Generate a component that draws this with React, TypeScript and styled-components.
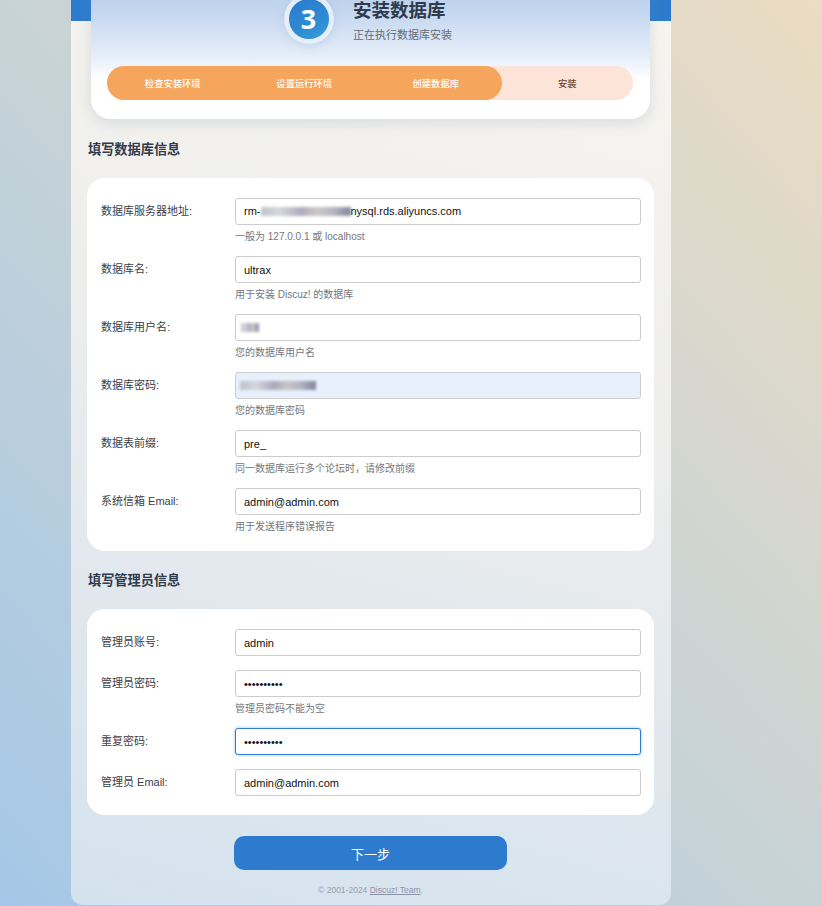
import React from "react";
import styled, { createGlobalStyle } from "styled-components";

const GlobalStyle = createGlobalStyle`
  html, body { margin: 0; padding: 0; }
  body {
    min-height: 906px;
    background: linear-gradient(to bottom left, #ebdcc3 0%, #c8d3d6 50%, #a4c7e7 100%);
    font-family: "Liberation Sans", "Noto Sans CJK SC", sans-serif;
    overflow: hidden;
  }
`;

const Shell = styled.div`
  width: 600px;
  margin-left: 71px;
  min-height: 905px;
  box-sizing: border-box;
  border-radius: 0 0 12px 12px;
  background:
    linear-gradient(#2d7bce, #2d7bce) top / 100% 21px no-repeat,
    linear-gradient(195deg, #f7f5f0 0%, #eeeeec 40%, #d4e2ef 100%);
  padding: 0 17px 7px 16px;
  display: flex;
  flex-direction: column;
`;

const HeaderCard = styled.header`
  position: relative;
  margin: -20px 4px 1px 4px;
  padding: 14px 17px 19px 16px;
  border-radius: 0 0 20px 20px;
  background: linear-gradient(180deg, #b6cceb 0%, #c6d8f0 25%, #e6eef9 55%, #ffffff 72%);
  box-shadow: 0 4px 14px rgba(120, 140, 170, 0.22);
  display: flex;
  flex-direction: column;
  gap: 22px;
`;

const HeadRow = styled.div`
  display: flex;
  align-items: center;
  justify-content: center;
  gap: 19px;
  padding-right: 4px;
`;

const StepBadge = styled.div`
  width: 40px;
  height: 40px;
  margin: 5px;
  border-radius: 50%;
  background: linear-gradient(150deg, #2b7acd 0%, #2e8bd3 60%, #3a9fd9 100%);
  box-shadow: 0 0 0 5px rgba(236, 242, 250, 0.85), 0 2px 9px 5px rgba(150, 175, 210, 0.35);
  color: #fff;
  font-family: "Open Sans", "Liberation Sans", sans-serif;
  font-weight: 700;
  font-size: 27px;
  line-height: 40px;
  text-align: center;
  text-indent: -1px;
`;

const TitleBlock = styled.div`
  display: flex;
  flex-direction: column;
  gap: 4px;
  padding-top: 4px;
`;

const Title = styled.h1`
  margin: 0;
  font-size: 18.5px;
  line-height: 24px;
  font-weight: 700;
  color: #2f3a4c;
`;

const Subtitle = styled.div`
  font-size: 11px;
  line-height: 16px;
  color: #666a70;
`;

const Progress = styled.div`
  display: grid;
  grid-template-columns: repeat(4, 1fr);
  height: 34px;
  border-radius: 17px;
  background: #fde4d9;
  overflow: hidden;
`;

const Step = styled.div<{ $done: boolean; $last?: boolean }>`
  display: flex;
  align-items: center;
  justify-content: center;
  font-size: 9.3px;
  font-weight: 500;
  color: ${(p) => (p.$done ? "#ffffff" : "#6e4124")};
  background: ${(p) => (p.$done ? "#f5a65c" : "transparent")};
  border-radius: ${(p) => (p.$last ? "0 17px 17px 0" : "0")};
`;

const SectionTitle = styled.h2`
  margin: 21px 0 19px 1px;
  font-size: 13.2px;
  line-height: 18px;
  font-weight: 700;
  color: #2f3a4c;
`;

const Card = styled.section`
  background: #ffffff;
  border-radius: 18px;
  padding: 20px 13px 19px 14px;
  display: flex;
  flex-direction: column;
  gap: 14px;
`;

const Row = styled.div`
  display: grid;
  grid-template-columns: 134px 1fr;
  align-items: start;
`;

const Label = styled.label`
  font-size: 11px;
  line-height: 27px;
  color: #3d4045;
`;

const FieldCol = styled.div`
  display: flex;
  flex-direction: column;
`;

const Input = styled.input<{ $autofill?: boolean; $focus?: boolean }>`
  box-sizing: border-box;
  width: 100%;
  height: 27px;
  margin: 0;
  padding: 0 8px;
  border: 1px solid ${(p) => (p.$focus ? "#2f7fd6" : "#cccccc")};
  border-radius: 3px;
  background: ${(p) => (p.$autofill ? "#e8f0fe" : "#ffffff")};
  box-shadow: ${(p) => (p.$focus ? "0 0 3px rgba(47,127,214,0.55)" : "none")};
  font-family: "Liberation Sans", "Noto Sans CJK SC", sans-serif;
  font-size: 11px;
  line-height: 25px;
  color: #111;
  outline: none;
  display: flex;
  align-items: center;
  white-space: nowrap;
  overflow: hidden;
`;

const Blur = styled.span<{ $w: number }>`
  display: inline-block;
  width: ${(p) => p.$w}px;
  height: 9px;
  filter: blur(1.6px);
  background: linear-gradient(90deg, #b4b7c0, #d0d2d8 20%, #9f9db2 45%, #c4bdb9 62%, #a7a9b9 80%, #6f7288);
  opacity: 0.85;
`;

const Hint = styled.div`
  padding-top: 7px;
  font-size: 10px;
  line-height: 10px;
  color: #74777c;
`;

const Actions = styled.div`
  display: flex;
  flex-direction: column;
  align-items: center;
  padding-top: 21px;
`;

const NextButton = styled.button`
  width: 273px;
  height: 34px;
  border: 0;
  border-radius: 10px;
  background: #2d7bce;
  color: #fff;
  font-family: "Liberation Sans", "Noto Sans CJK SC", sans-serif;
  font-size: 13px;
  cursor: pointer;
`;

const Footer = styled.footer`
  margin-top: 12px;
  font-size: 8.5px;
  line-height: 16px;
  color: #9a9fae;
  a { color: #8b93ab; text-decoration: underline; }
`;

type FieldDef = {
  label: string;
  value?: string;
  node?: React.ReactNode;
  hint?: string;
  type?: string;
  autofill?: boolean;
  focus?: boolean;
};

const dbFields: FieldDef[] = [
  {
    label: "数据库服务器地址:",
    node: (
      <>
        rm-<Blur $w={90} />nysql.rds.aliyuncs.com
      </>
    ),
    hint: "一般为 127.0.0.1 或 localhost",
  },
  { label: "数据库名:", value: "ultrax", hint: "用于安装 Discuz! 的数据库" },
  { label: "数据库用户名:", node: <Blur $w={18} style={{ marginLeft: -3 }} />, hint: "您的数据库用户名" },
  {
    label: "数据库密码:",
    node: <Blur $w={76} style={{ marginLeft: -4 }} />,
    autofill: true,
    hint: "您的数据库密码",
  },
  { label: "数据表前缀:", value: "pre_", hint: "同一数据库运行多个论坛时，请修改前缀" },
  { label: "系统信箱 Email:", value: "admin@admin.com", hint: "用于发送程序错误报告" },
];

const adminFields: FieldDef[] = [
  { label: "管理员账号:", value: "admin" },
  { label: "管理员密码:", value: "adminadmin", type: "password", hint: "管理员密码不能为空" },
  { label: "重复密码:", value: "adminadmin", type: "password", focus: true },
  { label: "管理员 Email:", value: "admin@admin.com" },
];

const steps = ["检查安装环境", "设置运行环境", "创建数据库", "安装"];

function Field({ f }: { f: FieldDef }) {
  return (
    <Row>
      <Label>{f.label}</Label>
      <FieldCol>
        {f.node !== undefined ? (
          <Input as="div" $autofill={f.autofill}>
            {f.node}
          </Input>
        ) : (
          <Input
            type={f.type || "text"}
            defaultValue={f.value}
            $autofill={f.autofill}
            $focus={f.focus}
          />
        )}
        {f.hint && <Hint>{f.hint}</Hint>}
      </FieldCol>
    </Row>
  );
}

export default function App() {
  return (
    <>
      <GlobalStyle />
      <Shell>
        <HeaderCard>
          <HeadRow>
            <StepBadge>3</StepBadge>
            <TitleBlock>
              <Title>安装数据库</Title>
              <Subtitle>正在执行数据库安装</Subtitle>
            </TitleBlock>
          </HeadRow>
          <Progress>
            {steps.map((s, i) => (
              <Step key={s} $done={i < 3} $last={i === 2}>
                {s}
              </Step>
            ))}
          </Progress>
        </HeaderCard>

        <SectionTitle>填写数据库信息</SectionTitle>
        <Card>
          {dbFields.map((f) => (
            <Field key={f.label} f={f} />
          ))}
        </Card>

        <SectionTitle>填写管理员信息</SectionTitle>
        <Card>
          {adminFields.map((f) => (
            <Field key={f.label} f={f} />
          ))}
        </Card>

        <Actions>
          <NextButton type="button">下一步</NextButton>
          <Footer>
            © 2001-2024 <a href="#">Discuz! Team</a>.
          </Footer>
        </Actions>
      </Shell>
    </>
  );
}
